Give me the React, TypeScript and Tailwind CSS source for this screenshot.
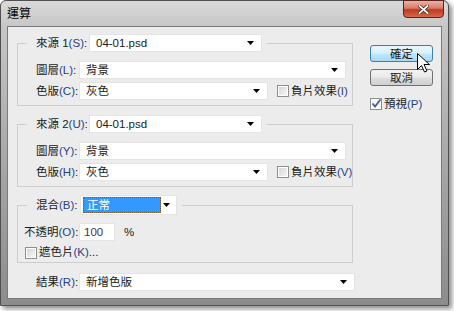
import React from "react";

const font = "font-['Liberation_Sans','Noto_Sans_CJK_TC',sans-serif]";

function Mn({ k }: { k: string }) {
  return <span className="text-[#27408b]">({k})</span>;
}

function Arrow() {
  return (
    <svg width="7" height="4" viewBox="0 0 7 4" className="shrink-0">
      <path d="M0 0h7L3.5 4z" fill="#000" />
    </svg>
  );
}

function Select({ value, className = "" }: { value: string; className?: string }) {
  return (
    <div
      className={`flex h-[18px] shrink-0 items-center justify-between border border-[#e4e4e4] bg-white pl-[6px] pr-[7px] ${className}`}
    >
      <span className="whitespace-nowrap leading-[16px] text-[#1a1a1a]">{value}</span>
      <Arrow />
    </div>
  );
}

function Check({ checked }: { checked?: boolean }) {
  return (
    <span className="relative flex h-[12px] w-[12px] shrink-0 items-center justify-center border border-[#8e8f8f] bg-white">
      <span
        className={`h-[8px] w-[8px] bg-gradient-to-br ${
          checked ? "from-[#f4f4f4] to-[#ffffff]" : "from-[#d6d6d6] to-[#f7f7f7]"
        }`}
      />
      {checked && (
        <svg width="11" height="11" viewBox="0 0 11 11" className="absolute left-[0px] top-[-1px]">
          <path d="M1.5 5.5L4 8.5L9.5 1.5" stroke="#3c5aa6" strokeWidth="1.8" fill="none" />
        </svg>
      )}
    </span>
  );
}

function Row({ label, mn, children }: { label: string; mn: string; children: React.ReactNode }) {
  return (
    <div className="flex h-[18px] items-center">
      <span className="w-[43px] shrink-0 whitespace-nowrap leading-[18px]">
        {label}
        <Mn k={mn} />:
      </span>
      {children}
    </div>
  );
}

function SourceGroup({ n, k, layer, channel, neg }: { n: string; k: string; layer: string; channel: string; neg: string }) {
  return (
    <fieldset className="w-[336px] border border-[#cdcdcd] pb-[5px] pl-[9px]">
      <legend className="pl-[9px] pr-[5px]">
        <div className="flex items-center">
          <span className="w-[53px] shrink-0 whitespace-nowrap leading-[18px]">
            來源 {n}
            <Mn k={k} />:
          </span>
          <Select value="04-01.psd" className="w-[173px]" />
        </div>
      </legend>
      <div className="mt-[9px] flex flex-col gap-[3px] pl-[9px]">
        <Row label="圖層" mn={layer}>
          <Select value="背景" className="w-[267px]" />
        </Row>
        <Row label="色版" mn={channel}>
          <Select value="灰色" className="w-[189px]" />
          <span className="ml-[9px] flex items-center gap-[2px]">
            <Check />
            <span className="whitespace-nowrap leading-[18px]">
              負片效果
              <Mn k={neg} />
            </span>
          </span>
        </Row>
      </div>
    </fieldset>
  );
}

export default function App() {
  return (
    <div className={`relative h-[311px] w-[454px] bg-white text-[11.5px] text-[#1a1a1a] ${font}`}>
      <div className="flex h-[306px] w-[449px] flex-col rounded-t-[6px] border border-[#4f4f4f] bg-[linear-gradient(to_bottom,#dadada_0px,#c6c6c6_26px,#a3a3a3_60%,#8c8c8c_100%)] shadow-[3px_3px_5px_rgba(0,0,0,0.45)]">
        <div className="relative flex h-[25px] shrink-0 items-center pl-[6px]">
          <span className="text-[12px] leading-[14px] text-black">運算</span>
          <div className="absolute right-[4px] top-[-1px] flex h-[18px] w-[41px] items-center justify-center rounded-b-[4px] border border-[#5c2118] bg-[linear-gradient(to_bottom,#eab3a6_0%,#d97a66_45%,#c0391f_55%,#d36b4e_100%)]">
            <svg width="11" height="9" viewBox="0 0 11 9">
              <path d="M1.5 1L9.5 8M9.5 1L1.5 8" stroke="#3a1a14" strokeWidth="3.2" strokeLinecap="square" />
              <path d="M1.5 1L9.5 8M9.5 1L1.5 8" stroke="#ffffff" strokeWidth="1.8" strokeLinecap="square" />
            </svg>
          </div>
        </div>

        <div className="mx-[6px] mb-[6px] flex flex-1 border border-[#7b7b7b] bg-[#ececec]">
          <div className="flex w-[347px] shrink-0 flex-col pl-[9px] pt-[7px]">
            <SourceGroup n="1" k="S" layer="L" channel="C" neg="I" />
            <div className="mt-[9px]">
              <SourceGroup n="2" k="U" layer="Y" channel="H" neg="V" />
            </div>

            <fieldset className="mt-[8px] w-[336px] border border-[#cdcdcd] pb-[3px] pl-[9px]">
              <legend className="pl-[9px] pr-[5px]">
                <div className="flex items-center">
                  <span className="w-[44px] shrink-0 whitespace-nowrap leading-[18px]">
                    混合
                    <Mn k="B" />:
                  </span>
                  <div className="flex h-[20px] w-[97px] items-center justify-between border border-[#e4e4e4] bg-white pl-[2px] pr-[6px]">
                    <span className="flex h-[16px] w-[78px] items-center border border-dotted border-[#7a5a2a] bg-[#3399ff] pl-[3px] leading-[14px] text-white">
                      正常
                    </span>
                    <Arrow />
                  </div>
                </div>
              </legend>
              <div className="mt-[8px] flex flex-col">
                <div className="-ml-[3px] flex h-[18px] items-center">
                  <span className="w-[55px] shrink-0 whitespace-nowrap leading-[18px]">
                    不透明
                    <Mn k="O" />:
                  </span>
                  <div className="flex h-[18px] w-[36px] items-center border border-[#e4e4e4] bg-white pl-[4px] leading-[16px] text-[#4b2a4b]">
                    100
                  </div>
                  <span className="ml-[9px] leading-[18px]">%</span>
                </div>
                <div className="-ml-[2px] mt-[5px] flex h-[13px] items-center gap-[2px]">
                  <Check />
                  <span className="whitespace-nowrap leading-[13px]">
                    遮色片
                    <Mn k="K" />
                    ...
                  </span>
                </div>
              </div>
            </fieldset>

            <div className="ml-[19px] mt-[10px] flex h-[18px] items-center">
              <span className="w-[43px] shrink-0 whitespace-nowrap leading-[18px]">
                結果
                <Mn k="R" />:
              </span>
              <Select value="新增色版" className="w-[276px]" />
            </div>
          </div>

          <div className="flex flex-col pl-[15px] pt-[18px]">
            <div className="flex h-[17px] w-[63px] items-center justify-center rounded-[3px] border border-[#3c7fb1] bg-[linear-gradient(to_bottom,#eaf6fd_0%,#d9f0fc_45%,#bee6fd_55%,#a7d9f5_100%)] leading-[14px]">
              確定
            </div>
            <div className="mt-[7px] flex h-[17px] w-[63px] items-center justify-center rounded-[3px] border border-[#707070] bg-[linear-gradient(to_bottom,#f2f2f2_0%,#ebebeb_45%,#dddddd_55%,#cfcfcf_100%)] leading-[14px]">
              取消
            </div>
            <div className="mt-[11px] flex items-center gap-[2px]">
              <Check checked />
              <span className="whitespace-nowrap leading-[14px]">
                預視
                <Mn k="P" />
              </span>
            </div>
          </div>
        </div>
      </div>

      <svg
        width="13"
        height="20"
        viewBox="0 0 13 20"
        className="absolute left-[417px] top-[53px]"
      >
        <path
          d="M0.5 0.5V16.5L4.5 12.5L7.5 19L10 18L7 11.5H12.5Z"
          fill="#ffffff"
          stroke="#000000"
          strokeWidth="1"
          strokeLinejoin="miter"
        />
      </svg>
    </div>
  );
}
